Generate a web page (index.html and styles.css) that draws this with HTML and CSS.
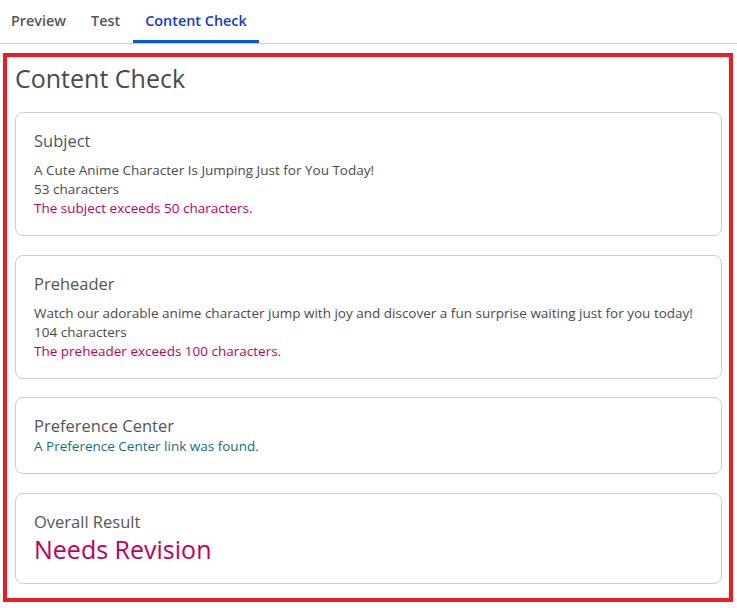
FILE: index.html
```html
<!DOCTYPE html>
<html lang="en">
<head>
  <meta charset="UTF-8">
  <title>Content Check</title>
  <link rel="stylesheet" href="styles.css">
</head>
<body>
  <!-- Tabs -->
  <nav class="tabs">
    <a href="#preview" class="tab">Preview</a>
    <a href="#test" class="tab">Test</a>
    <a href="#check" class="tab active">Content Check</a>
  </nav>

  <section class="check">
    <h1 class="check__title">Content Check</h1>

    <div class="card">
      <h2 class="card__title">Subject</h2>
      <p class="card__text">A Cute Anime Character Is Jumping Just for You Today!</p>
      <p class="card__text">53 characters</p>
      <p class="card__text card__text--warn">The subject exceeds 50 characters.</p>
    </div>

    <div class="card">
      <h2 class="card__title">Preheader</h2>
      <p class="card__text">Watch our adorable anime character jump with joy and discover a fun surprise waiting just for you today!</p>
      <p class="card__text">104 characters</p>
      <p class="card__text card__text--warn">The preheader exceeds 100 characters.</p>
    </div>

    <div class="card card--tight">
      <h2 class="card__title">Preference Center</h2>
      <p class="card__text card__text--ok">A Preference Center link was found.</p>
    </div>

    <div class="card card--tight">
      <h2 class="card__title">Overall Result</h2>
      <p class="card__result">Needs Revision</p>
    </div>
  </section>
</body>
</html>
```

FILE: styles.css
```css
body {
  margin: 0;
  font-family: "Open Sans", "Noto Sans", sans-serif;
  color: #4a4a4a;
  background: #fff;
}

/* Tabs */
.tabs {
  display: flex;
  border-bottom: 1px solid #cfcfcf;
}

.tab {
  padding: 10px 12.5px 9px;
  font-size: 14.4px;
  font-weight: 600;
  color: #555;
  text-decoration: none;
  border-bottom: 3px solid transparent;
  line-height: 21px;
}

.tab:first-child {
  padding-left: 11px;
}

.tab.active {
  color: #1339c9;
  border-bottom-color: #0a55d8;
}

/* Check panel */
.check {
  margin: 9px 4px 0 3px;
  padding: 4px 7px 14px 8px;
  border: 4px solid #ed1c24;
}

.check__title {
  margin: 0 0 17px;
  font-size: 25px;
  font-weight: 400;
  line-height: 34px;
  color: #4a4a4a;
}

.card {
  padding: 17px 18px 17px;
  margin-bottom: 18.5px;
  border: 1px solid #cdcdcd;
  border-radius: 8px;
}

.card:last-child {
  margin-bottom: 0;
}

.card__title {
  margin: 0 0 9px;
  font-size: 16.5px;
  font-weight: 400;
  line-height: 22px;
  color: #555;
}

.card--tight .card__title {
  margin-bottom: 0;
}

.card__text {
  margin: 0;
  font-size: 13.5px;
  line-height: 19px;
}

.card__text--warn {
  color: #c2005a;
}

.card__text--ok {
  color: #11707e;
}

.card__result {
  margin: 0;
  font-size: 25px;
  line-height: 33px;
  color: #c2005a;
}
```
